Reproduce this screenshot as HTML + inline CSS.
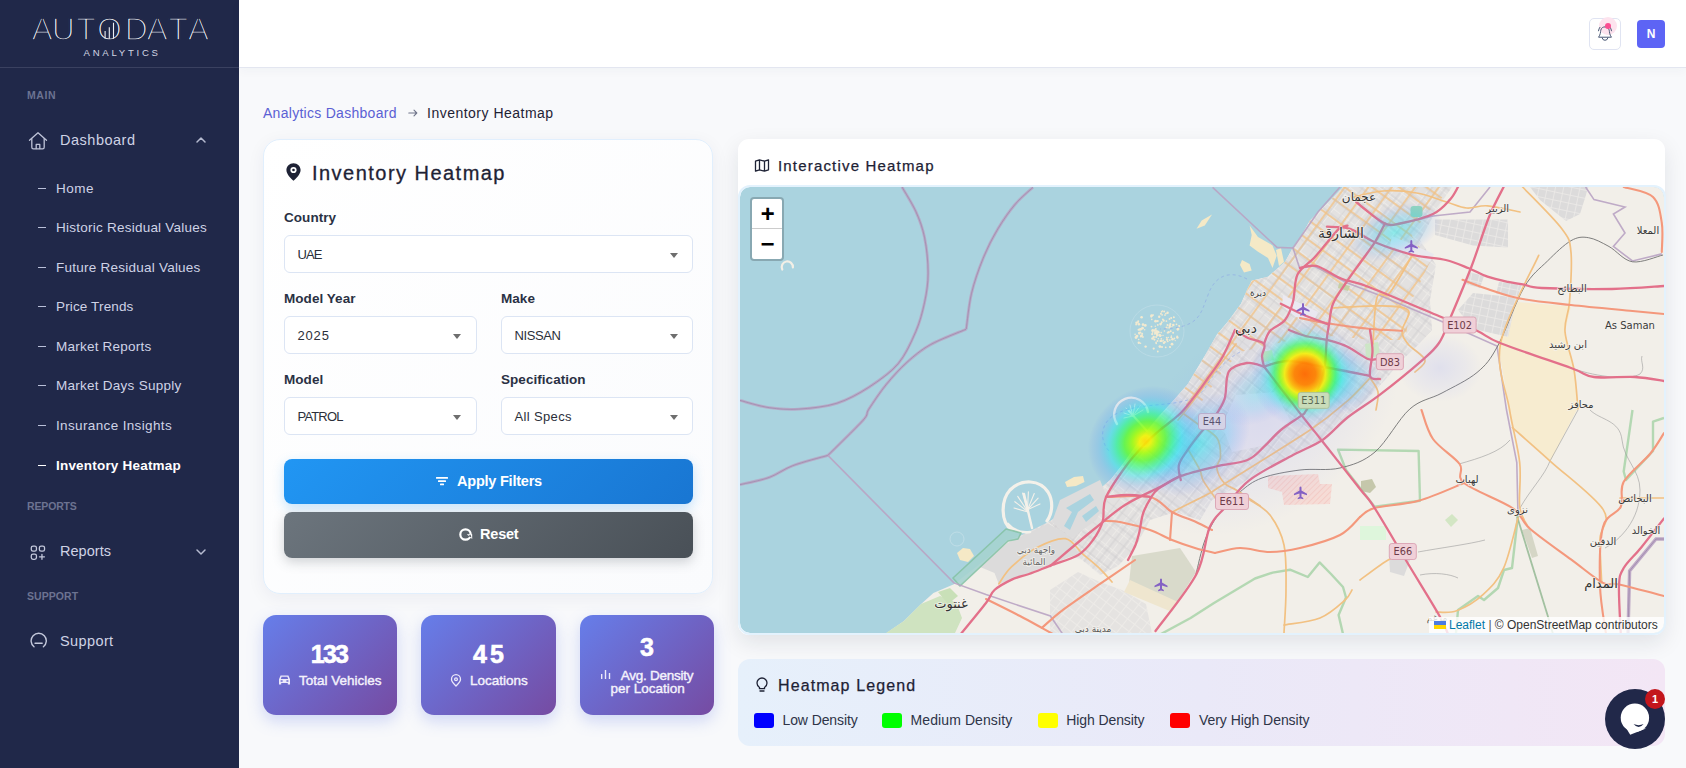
<!DOCTYPE html>
<html lang="en">
<head>
<meta charset="utf-8">
<title>Inventory Heatmap - Autodata Analytics</title>
<style>
*{box-sizing:border-box;margin:0;padding:0}
html,body{width:1686px;height:768px;overflow:hidden}
body{position:relative;background:#f8f9fb;font-family:"Liberation Sans","DejaVu Sans",sans-serif;color:#1e2235;-webkit-font-smoothing:antialiased}
.abs{position:absolute}
.t{position:absolute;white-space:nowrap;line-height:1}
/* sidebar */
#sidebar{position:absolute;left:0;top:0;width:239px;height:768px;background:#202849}
#sidebar .logo-line{position:absolute;left:0;top:67px;width:239px;height:1px;background:#3a4160}
.sec{color:#6c7391;font-size:10.5px;font-weight:700}
.nav{color:#cfd3e5;font-size:14.5px}
.sub{color:#cfd3e6;font-size:13.5px;letter-spacing:.1px}
.dash{position:absolute;left:38px;width:8px;height:1.4px;background:#b9bfd8}
/* header */
#header{position:absolute;left:239px;top:0;width:1447px;height:68px;background:#fff;border-bottom:1px solid #e3e6f0;box-shadow:0 3px 10px rgba(40,50,90,.035)}
/* cards */
.card{position:absolute;background:#fff}
.lbl{font-size:13.5px;font-weight:700;color:#2a3144;letter-spacing:.05px}
.sel{position:absolute;height:38px;border:1px solid #dce5f4;border-radius:6px;background:#fff}
.sel span{position:absolute;left:12.500px;top:11.500px;font-size:13px;line-height:14px;color:#2b2f3a}
.sel i{position:absolute;right:14.500px;top:17px;width:0;height:0;border-left:4px solid transparent;border-right:4px solid transparent;border-top:5px solid #6e6e6e}
.btn{position:absolute;left:284px;width:409px;border-radius:8px;color:#fff;font-weight:700;font-size:14.5px}
.stat{position:absolute;top:615px;height:100px;border-radius:13px;background:linear-gradient(135deg,#667eea 0%,#764ba2 100%);box-shadow:0 6px 16px rgba(102,126,234,.28);color:#fff}
.stat b{position:absolute;left:0;right:0;text-align:center;font-size:25px;line-height:1;font-weight:700;-webkit-text-stroke:.6px #fff}
.stat .s{position:absolute;white-space:nowrap;font-size:13.5px;font-weight:400;line-height:1;color:#f4f2fc;-webkit-text-stroke:.4px #f4f2fc}
.lg{position:absolute;top:713px;width:20px;height:15px;border-radius:3px}
.lgt{top:713px;font-size:14px;color:#2e3447;line-height:14px}
</style>
</head>
<body>

<!-- ================= SIDEBAR ================= -->
<div id="sidebar">
  <svg class="abs" style="left:0;top:0" width="239" height="67" viewBox="0 0 239 67">
    <text x="31.55 51.8 76.35 96.9 124.7 146.45 168.4 187.8" y="40" font-family="Liberation Sans, sans-serif" font-size="32" fill="#f4f5f9" stroke="#202849" stroke-width="1.7" paint-order="fill stroke">AUTODATA</text>
    <g stroke="#eef0f6" stroke-width="1.1" fill="none">
      <path d="M105.1 38.8V31 M109.3 38.8V27.3 M113.5 38.8V22.8"/>
    </g>
    <text x="83.5" y="56.2" font-family="Liberation Sans, sans-serif" font-size="9.6" fill="#d3d6e4" textLength="74.5" lengthAdjust="spacing">ANALYTICS</text>
  </svg>
  <div class="logo-line"></div>

  <div class="t sec" style="left:27px;top:90px;letter-spacing:.62px">MAIN</div>

  <!-- dashboard -->
  <svg class="abs" style="left:28px;top:131px" width="20" height="20" viewBox="0 0 20 20" fill="none" stroke="#bfc4d8" stroke-width="1.3" stroke-linejoin="round" stroke-linecap="round">
    <path d="M1.5 9.2 L10 1.8 L18.5 9.2"/><path d="M3.8 7.6V16.2a1.6 1.6 0 0 0 1.6 1.6h9.2a1.6 1.6 0 0 0 1.6-1.6V7.6"/><path d="M8.2 17.6v-4.2h3.6v4.2"/>
  </svg>
  <div class="t nav" style="left:60px;top:133px;letter-spacing:.51px">Dashboard</div>
  <svg class="abs" style="left:195px;top:136px" width="12" height="8" viewBox="0 0 12 8" fill="none" stroke="#b6bbd0" stroke-width="1.5" stroke-linecap="round" stroke-linejoin="round"><path d="M2 6 L6 2 L10 6"/></svg>

  <div class="dash" style="top:188px"></div><div class="t sub" style="left:56px;top:182px;letter-spacing:0.5px">Home</div>
  <div class="dash" style="top:227px"></div><div class="t sub" style="left:56px;top:221px;letter-spacing:0.24px">Historic Residual Values</div>
  <div class="dash" style="top:267px"></div><div class="t sub" style="left:56px;top:261px;letter-spacing:0.24px">Future Residual Values</div>
  <div class="dash" style="top:306px"></div><div class="t sub" style="left:56px;top:300px;letter-spacing:0.14px">Price Trends</div>
  <div class="dash" style="top:346px"></div><div class="t sub" style="left:56px;top:340px;letter-spacing:0.23px">Market Reports</div>
  <div class="dash" style="top:385px"></div><div class="t sub" style="left:56px;top:379px;letter-spacing:0.26px">Market Days Supply</div>
  <div class="dash" style="top:425px"></div><div class="t sub" style="left:56px;top:419px;letter-spacing:0.36px">Insurance Insights</div>
  <div class="dash" style="top:465px;background:#fff"></div><div class="t sub" style="left:56px;top:459px;color:#fff;font-weight:700;letter-spacing:.2px">Inventory Heatmap</div>

  <div class="t sec" style="left:27px;top:501px;letter-spacing:-.15px">REPORTS</div>
  <svg class="abs" style="left:30px;top:544.500px" width="16" height="15.500" viewBox="0 0 18 18" fill="none" stroke="#c3c8db" stroke-width="1.500" stroke-linecap="round"><rect x="1.200" y="1.200" width="6" height="6" rx="2"/><rect x="10.600" y="1.200" width="6" height="6" rx="2"/><rect x="1.200" y="10.600" width="6" height="6" rx="2"/><path d="M13.600 10.800v5.800M10.700 13.700h5.800"/></svg>
  <div class="t nav" style="left:60px;top:544px;letter-spacing:.03px">Reports</div>
  <svg class="abs" style="left:195px;top:548px" width="12" height="8" viewBox="0 0 12 8" fill="none" stroke="#b6bbd0" stroke-width="1.5" stroke-linecap="round" stroke-linejoin="round"><path d="M2 2 L6 6 L10 2"/></svg>

  <div class="t sec" style="left:27px;top:591px;letter-spacing:.07px">SUPPORT</div>
  <svg class="abs" style="left:30px;top:632px" width="17" height="17" viewBox="0 0 17 17" fill="none" stroke="#c3c8db" stroke-width="1.400" stroke-linecap="round"><path d="M4 14.800a7.600 7.600 0 1 1 9.400 0"/><path d="M5 11.300h7.200"/></svg>
  <div class="t nav" style="left:60px;top:634px;letter-spacing:.39px">Support</div>
</div>

<!-- ================= HEADER ================= -->
<div id="header"></div>
<div class="abs" style="left:1589px;top:18px;width:32px;height:32px;border:1px solid #e0e4f2;border-radius:5px;background:#fff"></div>
<div class="abs" style="left:1598.800px;top:16.900px;width:18px;height:18px;border-radius:50%;background:#fde3ee"></div>
<svg class="abs" style="left:1595px;top:22px" width="20" height="22" viewBox="0 0 20 22" fill="none" stroke="#4b5976" stroke-width="1" stroke-linecap="round" stroke-linejoin="round"><path d="M3.800 14.900C5.600 12.500 5.400 10 5.800 8.200 6.300 5.800 8 4.900 10 4.900s3.700.900 4.200 3.300c.4 1.800.2 4.300 2 6.700z"/><path d="M7.100 15.900a2.950 2.950 0 0 0 5.800 0"/><path d="M3.500 8.800c.2-1.400.7-2.500 1.400-3.500M16.500 8.800c-.2-1.400-.7-2.500-1.400-3.500"/></svg>
<div class="abs" style="left:1604.900px;top:22.900px;width:6px;height:6px;border-radius:50%;background:#fb4e92"></div>
<div class="abs" style="left:1637px;top:20px;width:28px;height:28px;border-radius:4px;background:#5d64f5"></div>
<div class="t" style="left:1637px;top:28px;width:28px;text-align:center;color:#fff;font-size:12px;font-weight:700">N</div>

<!-- ================= BREADCRUMB ================= -->
<div class="t" style="left:263px;top:106px;font-size:14px;color:#5b60d4;letter-spacing:.28px">Analytics Dashboard</div>
<svg class="abs" style="left:408px;top:108px" width="10" height="10" viewBox="0 0 10 10" fill="none" stroke="#6f748a" stroke-width="1.100" stroke-linecap="round" stroke-linejoin="round"><path d="M.8 5h8M6 2.200 8.800 5 6 7.800"/></svg>
<div class="t" style="left:427px;top:106px;font-size:14px;color:#1e2235;letter-spacing:.49px">Inventory Heatmap</div>

<!-- ================= FILTER CARD ================= -->
<div class="card" style="left:263px;top:139px;width:450px;height:455px;border-radius:17px;border:1px solid #e1effd;background:linear-gradient(135deg,#fff 0%,#fafbfd 100%);box-shadow:0 4px 18px rgba(30,40,90,.06)"></div>
<svg class="abs" style="left:285px;top:162px" width="17" height="20" viewBox="0 0 17 20"><path d="M8.500 1.200C4.500 1.200 1.400 4.200 1.400 8c0 4.600 5.200 9 7.100 10.800C10.400 17 15.600 12.600 15.600 8c0-3.800-3.100-6.800-7.100-6.800z" fill="#1e2235"/><circle cx="8.500" cy="8" r="3.100" fill="#fff"/><circle cx="8.500" cy="8" r="1.300" fill="#1e2235"/></svg>
<div class="t" style="left:312px;top:163px;font-size:20px;color:#1e2235;letter-spacing:1.47px;-webkit-text-stroke:.3px #1e2235">Inventory Heatmap</div>

<div class="t lbl" style="left:284px;top:210.7px">Country</div>
<div class="sel" style="left:284px;top:235px;width:409px"><span style="letter-spacing:-0.85px">UAE</span><i></i></div>
<div class="t lbl" style="left:284px;top:291.7px">Model Year</div>
<div class="t lbl" style="left:501px;top:291.7px">Make</div>
<div class="sel" style="left:284px;top:316px;width:192.500px"><span style="letter-spacing:0.83px">2025</span><i></i></div>
<div class="sel" style="left:501px;top:316px;width:192px"><span style="letter-spacing:-0.42px">NISSAN</span><i></i></div>
<div class="t lbl" style="left:284px;top:372.7px">Model</div>
<div class="t lbl" style="left:501px;top:372.7px">Specification</div>
<div class="sel" style="left:284px;top:397px;width:192.500px"><span style="letter-spacing:-0.83px">PATROL</span><i></i></div>
<div class="sel" style="left:501px;top:397px;width:192px"><span style="letter-spacing:0.36px">All Specs</span><i></i></div>

<div class="btn" style="top:459px;height:45px;background:linear-gradient(135deg,#2196f3,#1976d2);box-shadow:0 4px 12px rgba(33,150,243,.25)"></div>
<svg class="abs" style="left:435px;top:476px" width="14" height="10" viewBox="0 0 14 10" fill="#fff"><rect x="1" y="1" width="12" height="1.800" rx=".5"/><rect x="3" y="4.200" width="8" height="1.800" rx=".5"/><rect x="5" y="7.400" width="4" height="1.800" rx=".5"/></svg>
<div class="t" style="left:457px;top:474px;font-size:14.5px;font-weight:700;color:#fff;letter-spacing:-.22px">Apply Filters</div>

<div class="btn" style="top:512px;height:46px;background:linear-gradient(135deg,#6c757d,#495057);box-shadow:0 4px 12px rgba(73,80,87,.25)"></div>
<svg class="abs" style="left:458px;top:527px" width="15" height="15" viewBox="0 0 15 15" fill="none"><circle cx="7.500" cy="7.500" r="5.200" stroke="#fff" stroke-width="2.200"/><path d="M8.800 7.300h5.400v4.600z" fill="#fff"/><path d="M10.400 9.200 l2 -1.600 l1.200 3z" fill="#5a6168"/></svg>
<div class="t" style="left:480px;top:527px;font-size:14.5px;font-weight:700;color:#fff;letter-spacing:-.2px">Reset</div>

<!-- ================= STATS ================= -->
<div class="stat" style="left:263px;width:134px"><b style="top:27px;left:-2px;letter-spacing:-1.75px">133</b><span class="s" style="left:36px;top:59px">Total Vehicles</span></div>
<div class="stat" style="left:421px;width:135px"><b style="top:27px;letter-spacing:3px;padding-left:3px">45</b><span class="s" style="left:49px;top:59px">Locations</span></div>
<div class="stat" style="left:580px;width:134px"><b style="top:20px">3</b><span class="s" style="left:40.800px;top:54px;letter-spacing:-.25px">Avg. Density</span><span class="s" style="left:30.500px;top:67px">per Location</span></div>
<svg class="abs" style="left:278px;top:674px" width="13" height="12" viewBox="0 0 13 12" fill="#ece9fa"><path d="M2.600 1.500h7.800l1.600 3.800v5.200h-2.200v-1.500H3.200v1.500H1V5.300z M3.600 2.800 2.800 5h7.400l-.8-2.200z M2.600 6.200v1.500h2V6.200z M8.400 6.200v1.500h2V6.200z" fill-rule="evenodd"/></svg>
<svg class="abs" style="left:450px;top:674px" width="12" height="13" viewBox="0 0 12 13" fill="none" stroke="#ece9fa" stroke-width="1.300"><path d="M6 12C4.200 10.200 1.500 7.800 1.500 5.200a4.500 4.500 0 0 1 9 0C10.500 7.800 7.800 10.200 6 12z"/><circle cx="6" cy="5.200" r="1.400"/></svg>
<svg class="abs" style="left:600px;top:669px" width="12" height="11" viewBox="0 0 12 11" fill="#ece9fa"><rect x="1" y="5" width="1.400" height="5"/><rect x="4.800" y="1" width="1.400" height="9"/><rect x="8.800" y="4" width="1.400" height="6"/></svg>

<!-- ================= MAP CARD ================= -->
<div class="card" style="left:738px;top:139px;width:927px;height:496px;border-radius:11px;box-shadow:0 8px 22px rgba(20,25,50,.10)"></div>
<svg class="abs" style="left:754px;top:158px" width="16" height="15" viewBox="0 0 16 15" fill="none" stroke="#1e2235" stroke-width="1.300" stroke-linejoin="round"><path d="M1.500 3.200 5.500 1.800 10.500 3.200 14.500 1.800V11.800L10.500 13.200 5.500 11.800 1.500 13.200z M5.500 1.800v10 M10.500 3.200v10"/></svg>
<div class="t" style="left:778px;top:158px;font-size:15px;color:#1e2235;letter-spacing:1.18px;-webkit-text-stroke:.25px #1e2235">Interactive Heatmap</div>

<svg class="abs" style="left:740px;top:187px" width="924" height="446" viewBox="740 187 924 446">
<defs>
<clipPath id="mclip"><rect x="740" y="187" width="924" height="446" rx="10"/></clipPath>
<pattern id="grid" width="9" height="9" patternUnits="userSpaceOnUse" patternTransform="rotate(38)"><rect width="9" height="9" fill="#e3e1e0"/><path d="M0 .5H9M.5 0V9" stroke="#eceae7" stroke-width="1"/></pattern>
<pattern id="grid2" width="19" height="16" patternUnits="userSpaceOnUse" patternTransform="rotate(36)"><path d="M0 1H19M1 0V16" stroke="#f2c182" stroke-width="1.5" fill="none"/></pattern>
<pattern id="grid3" width="13" height="11" patternUnits="userSpaceOnUse" patternTransform="rotate(-52)"><path d="M0 1H13M1 0V11" stroke="#c4c3c6" stroke-width=".7" fill="none"/></pattern>
<pattern id="igrid" width="8" height="8" patternUnits="userSpaceOnUse" patternTransform="rotate(12)"><rect width="8" height="8" fill="#dcdbdb"/><path d="M0 .5H8M.5 0V8" stroke="#ebe9e6" stroke-width=".9"/></pattern>
<pattern id="hatch" width="4" height="4" patternUnits="userSpaceOnUse" patternTransform="rotate(45)"><rect width="4" height="4" fill="#f6dcd6"/><path d="M0 0V4" stroke="#f0b4ae" stroke-width=".8"/></pattern>
<radialGradient id="h1"><stop offset="0" stop-color="#ff6a00" stop-opacity=".96"/><stop offset=".2" stop-color="#ff8200" stop-opacity=".95"/><stop offset=".3" stop-color="#ffb400" stop-opacity=".92"/><stop offset=".38" stop-color="#f6f000" stop-opacity=".88"/><stop offset=".47" stop-color="#90ff00" stop-opacity=".78"/><stop offset=".57" stop-color="#20ff50" stop-opacity=".6"/><stop offset=".7" stop-color="#00f0e0" stop-opacity=".3"/><stop offset=".85" stop-color="#40b0ff" stop-opacity=".12"/><stop offset="1" stop-color="#4060ff" stop-opacity="0"/></radialGradient>
<radialGradient id="h2"><stop offset="0" stop-color="#ffdc00" stop-opacity=".92"/><stop offset=".1" stop-color="#f0f400" stop-opacity=".9"/><stop offset=".22" stop-color="#a0ff00" stop-opacity=".84"/><stop offset=".36" stop-color="#50ff20" stop-opacity=".74"/><stop offset=".5" stop-color="#10ff80" stop-opacity=".56"/><stop offset=".64" stop-color="#00eaf0" stop-opacity=".38"/><stop offset=".82" stop-color="#3098ff" stop-opacity=".17"/><stop offset="1" stop-color="#4060ff" stop-opacity="0"/></radialGradient>
<radialGradient id="h3"><stop offset="0" stop-color="#00f0f0" stop-opacity=".5"/><stop offset=".55" stop-color="#20c0ff" stop-opacity=".28"/><stop offset="1" stop-color="#5070ff" stop-opacity="0"/></radialGradient>
<radialGradient id="h4"><stop offset="0" stop-color="#8090ff" stop-opacity=".16"/><stop offset=".6" stop-color="#8c9aff" stop-opacity=".08"/><stop offset="1" stop-color="#8090ff" stop-opacity="0"/></radialGradient>
</defs>
<g clip-path="url(#mclip)">
<rect x="740" y="187" width="924" height="446" fill="#aad3df"/>
<path d="M1343 187 L1333 197.5 L1322.5 208 L1310 220.4 L1301.7 235 L1293 247.5 L1285 262 L1268 276.7 L1251.7 280.8 L1247.5 289 L1241 303.8 L1228.8 320.4 L1217 334.4 L1205.3 355 L1187.7 384.2 L1173 401 L1158.2 417 L1141.2 437.8 L1124.2 462.3 L1111 479.3 L1097.8 490.7 L1088 496 L1067.6 509.6 L1050 521.3 L1036 530 L1020 536 L1006.6 540.4 L989 556.5 L974.4 568.2 L953.9 584.3 L933.4 593 L921.7 603.4 L904 621 L886.5 633 L1664 633 L1664 187Z" fill="#f2efe9"/>
<path d="M1518 302 L1571 306.6 L1565 331.5 L1574 369.6 L1578 409 L1576.8 410 L1550.4 461.3 L1512.4 427.6 L1509.4 409 L1497.7 343Z" fill="#f7ecd0"/>
<path d="M1343 187 L1333 197.5 L1322.5 208 L1310 220.4 L1301.7 235 L1293 247.5 L1285 262 L1268 276.7 L1251.7 280.8 L1247.5 289 L1241 303.8 L1228.8 320.4 L1217 334.4 L1205.3 355 L1187.7 384.2 L1173 401 L1158.2 417 L1141.2 437.8 L1124.2 462.3 L1111 479.3 L1097.8 490.7 L1088 496 L1067.6 509.6 L1050 521.3 L1020 536 L1000 548 L1010 556 L1040 548 L1062 552 L1082 560 L1100 575 L1118 566 L1135 548 L1150 520 L1175 512 L1200 520 L1212 500 L1235 488 L1262 470 L1290 455 L1320 440 L1345 418 L1368 398 L1385 380 L1400 362 L1418 345 L1432 330 L1430 300 L1436 265 L1420 240 L1430 222 L1440 205 L1452 187Z" fill="url(#grid)"/>
<path d="M1343 187 L1333 197.5 L1322.5 208 L1310 220.4 L1301.7 235 L1293 247.5 L1285 262 L1268 276.7 L1251.7 280.8 L1247.5 289 L1241 303.8 L1228.8 320.4 L1217 334.4 L1205.3 355 L1187.7 384.2 L1176 400 L1196 410 L1222 372 L1240 352 L1270 345 L1300 338 L1335 336 L1372 340 L1405 340 L1412 300 L1430 262 L1412 236 L1425 215 L1440 200 L1452 187Z" fill="url(#grid2)" opacity=".95"/>
<path d="M1343 187 L1333 197.5 L1322.5 208 L1310 220.4 L1301.7 235 L1293 247.5 L1285 262 L1268 276.7 L1251.7 280.8 L1247.5 289 L1241 303.8 L1228.8 320.4 L1217 334.4 L1205.3 355 L1187.7 384.2 L1173 401 L1158.2 417 L1141.2 437.8 L1124.2 462.3 L1111 479.3 L1097.8 490.7 L1088 496 L1067.6 509.6 L1050 521.3 L1020 536 L1000 548 L1010 556 L1040 548 L1062 552 L1082 560 L1100 575 L1118 566 L1135 548 L1150 520 L1175 512 L1200 520 L1212 500 L1235 488 L1262 470 L1290 455 L1320 440 L1345 418 L1368 398 L1385 380 L1400 362 L1418 345 L1432 330 L1430 300 L1436 265 L1420 240 L1430 222 L1440 205 L1452 187Z" fill="url(#grid3)" opacity=".8"/>
<path d="M1283 295 L1318 312 L1314 321 L1296 317 L1282 306Z" fill="#ebe9f1"/>
<path d="M1236 395 L1275 392 L1290 420 L1262 446 L1232 452 L1222 425Z" fill="#ece9ea"/>
<path d="M1392 236 L1434 254 L1430 262 L1390 246Z" fill="#e9e8ee"/>
<path d="M1435 219.4 L1508 219.4 L1508 247.5 L1473 245.4 L1435 235Z" fill="url(#igrid)"/>
<path d="M1473 293 L1516.7 297.5 L1508 337 L1473 328.8 L1458 310Z" fill="url(#igrid)"/>
<path d="M1530 187 L1588.5 187 L1580 214 L1566 221 L1540 200Z" fill="url(#igrid)"/>
<path d="M1499 282 L1522 284 L1518 296 L1496 294Z" fill="url(#igrid)"/>
<path d="M1470 272 L1484 276 L1480 288 L1466 284Z" fill="url(#igrid)"/>
<path d="M1050 590 L1078 572 L1100 582 L1122 590 L1146 604 L1152 633 L1050 633Z" fill="url(#grid)" opacity=".85"/>
<path d="M1132 556 L1180 548 L1196 572 L1176 604 L1128 592Z" fill="#d9dacb"/>
<path d="M1130 580 L1178 602 L1172 612 L1124 592Z" fill="#efe6cf"/>
<path d="M1268 476 L1318 474 L1320 484 L1332 484 L1330 504 L1284 505 L1282 492 L1268 488Z" fill="url(#hatch)"/>
<path d="M1060 500 L1100 480 L1108 500 L1096 520 L1072 538 L1052 522Z" fill="#dddcdc"/>
<path d="M1066 508 L1090 494 L1094 500 L1078 512 L1070 530 L1064 526 L1072 512Z" fill="#aad3df"/><path d="M1082 516 L1096 506 L1099 511 L1086 522Z" fill="#aad3df"/>
<path d="M979.500 566.700 L1007.400 543 L1048.200 523.700 L1067.600 534.400 L1078.300 553.800 L1050.400 564.500 L1029 573 L1011.700 579.600 L998.800 583.900 L994.500 573Z" fill="#dcdbdb"/>
<path d="M886 633 L904 621 L921 604 L940 596 L956 602 L962 618 L955 633Z" fill="#cfe3c0"/>
<path d="M938 592 L950 588 L958 596 L948 604Z" fill="#c9e0b8"/>
<rect x="1410.500" y="206" width="12" height="11" rx="3" fill="#93d8bd"/>
<path d="M1262 352 L1272 350 L1274 360 L1264 362Z" fill="#cdebb0"/><path d="M1365 344 L1378 342 L1380 356 L1366 358Z" fill="#cfe8c4"/><path d="M1339 283 L1350 286 L1348 291 L1338 288Z" fill="#c6cfa5"/>
<path d="M1361 481 L1372 479 L1376 487 L1370 493 L1361 491Z" fill="#c5c7ab"/><path d="M1522 530 L1530 528 L1538 556 L1532 558Z" fill="#d5d6c6"/><rect x="1360" y="526" width="26" height="14" fill="#def6dc"/><path d="M1445 520 L1452 514 L1458 520 L1451 527Z" fill="#d3e6c4"/>
<path d="M1389 556 L1410 560 L1404 576 L1390 572Z" fill="#dcdbdb"/>
<g fill="#f5e9c6">
<path d="M1249.6 225.6 L1258 237 L1272.5 245.4 L1276.7 255.8 L1272.5 268 L1268 258 L1258 251.7 L1249.6 245.4 L1251.7 235Z"/>
<path d="M1242 260 L1249.6 264 L1251.7 270.4 L1244 272.5 L1240 265Z"/>
<path d="M1196.5 228.8 L1201.7 220.4 L1212 214.6 L1204.8 225.6Z"/>
<path d="M1276 250 L1281 248 L1284 262 L1279 266Z"/>
<path d="M1065 482 L1074 477 L1083 476 L1084.500 482 L1076 486 L1067 487Z"/>
<path d="M957 553 L963 548 L970 549 L974 556 L968 562 L960 560Z"/>
</g>
<circle cx="957" cy="539" r="7" fill="none" stroke="#c4dfe8" stroke-width=".8"/>
<g fill="#f3ead0"><circle cx="1153.7" cy="337.0" r="1.2"/><circle cx="1171.3" cy="337.3" r="1.0"/><circle cx="1171.4" cy="336.0" r="0.7"/><circle cx="1152.7" cy="332.7" r="0.8"/><circle cx="1138.7" cy="339.5" r="0.8"/><circle cx="1159.9" cy="346.6" r="1.4"/><circle cx="1145.3" cy="325.4" r="1.4"/><circle cx="1177.2" cy="336.5" r="0.9"/><circle cx="1160.9" cy="335.6" r="0.9"/><circle cx="1160.3" cy="324.1" r="1.1"/><circle cx="1152.8" cy="329.8" r="0.7"/><circle cx="1162.0" cy="347.0" r="1.0"/><circle cx="1162.1" cy="314.8" r="0.9"/><circle cx="1143.0" cy="324.6" r="1.3"/><circle cx="1155.6" cy="321.2" r="1.4"/><circle cx="1167.1" cy="339.4" r="1.2"/><circle cx="1165.7" cy="342.1" r="0.7"/><circle cx="1137.9" cy="322.5" r="0.9"/><circle cx="1151.3" cy="316.6" r="1.1"/><circle cx="1137.0" cy="336.1" r="1.4"/><circle cx="1139.2" cy="333.7" r="0.7"/><circle cx="1151.7" cy="315.6" r="1.4"/><circle cx="1161.7" cy="322.2" r="1.0"/><circle cx="1155.8" cy="329.1" r="1.0"/><circle cx="1160.1" cy="336.0" r="0.7"/><circle cx="1157.8" cy="324.9" r="0.9"/><circle cx="1140.5" cy="343.2" r="0.8"/><circle cx="1141.7" cy="335.6" r="1.3"/><circle cx="1165.9" cy="313.6" r="0.9"/><circle cx="1173.8" cy="317.5" r="0.8"/><circle cx="1161.3" cy="338.8" r="0.9"/><circle cx="1140.3" cy="332.4" r="0.9"/><circle cx="1170.7" cy="331.3" r="1.0"/><circle cx="1136.5" cy="322.8" r="1.2"/><circle cx="1139.8" cy="329.5" r="1.2"/><circle cx="1177.4" cy="337.5" r="1.2"/><circle cx="1171.2" cy="318.1" r="1.0"/><circle cx="1152.2" cy="334.2" r="1.1"/><circle cx="1161.2" cy="332.6" r="0.8"/><circle cx="1163.3" cy="340.3" r="0.7"/><circle cx="1164.4" cy="331.0" r="0.8"/><circle cx="1155.3" cy="332.7" r="1.3"/><circle cx="1151.5" cy="326.6" r="0.9"/><circle cx="1172.0" cy="344.2" r="1.4"/><circle cx="1142.4" cy="333.9" r="0.8"/><circle cx="1166.7" cy="337.6" r="0.9"/><circle cx="1160.7" cy="324.8" r="0.7"/><circle cx="1172.0" cy="326.7" r="0.8"/><circle cx="1154.4" cy="330.4" r="1.1"/><circle cx="1178.0" cy="328.4" r="1.2"/><circle cx="1156.1" cy="342.4" r="0.8"/><circle cx="1159.2" cy="316.8" r="1.2"/><circle cx="1152.5" cy="338.5" r="1.3"/><circle cx="1177.9" cy="329.2" r="1.3"/><circle cx="1165.0" cy="315.1" r="0.9"/><circle cx="1144.7" cy="329.8" r="0.7"/><circle cx="1167.6" cy="332.7" r="0.9"/><circle cx="1136.0" cy="337.5" r="1.4"/><circle cx="1169.1" cy="327.8" r="0.9"/><circle cx="1158.3" cy="338.8" r="0.8"/><circle cx="1141.6" cy="317.2" r="1.3"/><circle cx="1139.3" cy="333.1" r="1.3"/><circle cx="1172.5" cy="339.3" r="1.3"/><circle cx="1160.9" cy="313.8" r="1.0"/><circle cx="1165.7" cy="347.3" r="0.9"/><circle cx="1164.1" cy="311.5" r="1.0"/><circle cx="1138.8" cy="342.7" r="1.2"/><circle cx="1160.2" cy="336.3" r="0.8"/><circle cx="1173.8" cy="320.7" r="0.8"/><circle cx="1167.6" cy="312.7" r="1.2"/><circle cx="1158.2" cy="332.2" r="1.4"/><circle cx="1169.8" cy="325.9" r="1.3"/><circle cx="1161.2" cy="323.7" r="0.9"/><circle cx="1154.4" cy="339.6" r="1.1"/><circle cx="1156.2" cy="343.4" r="0.8"/><circle cx="1167.5" cy="325.0" r="1.0"/><circle cx="1138.2" cy="321.2" r="1.0"/><circle cx="1170.3" cy="324.2" r="1.1"/><circle cx="1154.9" cy="330.7" r="1.0"/><circle cx="1157.3" cy="331.7" r="1.3"/><circle cx="1163.9" cy="342.8" r="1.2"/><circle cx="1140.9" cy="329.3" r="1.2"/><circle cx="1169.8" cy="340.1" r="0.9"/><circle cx="1153.7" cy="348.6" r="1.1"/><circle cx="1138.9" cy="324.3" r="1.3"/><circle cx="1140.9" cy="336.4" r="1.1"/><circle cx="1138.5" cy="329.7" r="1.0"/><circle cx="1142.5" cy="328.2" r="1.4"/><circle cx="1166.6" cy="327.7" r="1.1"/><circle cx="1176.5" cy="324.4" r="0.8"/><circle cx="1167.2" cy="339.9" r="0.8"/><circle cx="1157.3" cy="335.3" r="1.2"/><circle cx="1161.6" cy="311.9" r="0.8"/><circle cx="1153.2" cy="315.1" r="0.8"/><circle cx="1173.8" cy="317.2" r="0.9"/><circle cx="1169.7" cy="327.5" r="1.0"/><circle cx="1177.7" cy="329.8" r="0.8"/><circle cx="1142.9" cy="336.9" r="0.9"/><circle cx="1160.9" cy="340.9" r="1.2"/><circle cx="1173.1" cy="332.8" r="1.0"/><circle cx="1168.8" cy="332.2" r="1.1"/><circle cx="1152.6" cy="330.7" r="1.4"/><circle cx="1162.4" cy="311.1" r="0.8"/><circle cx="1156.7" cy="334.0" r="1.2"/><circle cx="1156.1" cy="337.1" r="1.0"/><circle cx="1174.4" cy="321.2" r="0.9"/><circle cx="1170.0" cy="347.0" r="1.1"/><circle cx="1155.3" cy="326.3" r="0.7"/><circle cx="1151.8" cy="319.4" r="0.8"/><circle cx="1173.3" cy="325.0" r="1.3"/><circle cx="1175.2" cy="340.6" r="0.7"/><circle cx="1166.4" cy="321.1" r="0.9"/><circle cx="1136.1" cy="324.5" r="0.9"/><circle cx="1167.8" cy="341.3" r="0.9"/><circle cx="1163.0" cy="335.4" r="0.7"/><circle cx="1160.4" cy="340.9" r="0.9"/><circle cx="1157.7" cy="321.1" r="1.1"/><circle cx="1162.4" cy="341.0" r="0.7"/><circle cx="1157.0" cy="332.7" r="1.2"/><circle cx="1135.1" cy="334.2" r="0.8"/><circle cx="1162.9" cy="319.5" r="1.0"/><circle cx="1163.7" cy="320.7" r="1.1"/><circle cx="1145.6" cy="346.6" r="1.2"/><circle cx="1154.7" cy="334.0" r="0.8"/><circle cx="1174.4" cy="338.5" r="0.9"/><circle cx="1159.7" cy="335.1" r="1.3"/><circle cx="1169.5" cy="319.0" r="0.9"/><circle cx="1157.5" cy="341.0" r="1.0"/><circle cx="1164.8" cy="341.8" r="0.9"/><circle cx="1179.1" cy="326.1" r="1.1"/><circle cx="1157.8" cy="351.5" r="0.9"/><circle cx="1156.8" cy="331.3" r="1.0"/><circle cx="1141.9" cy="333.2" r="0.8"/><circle cx="1156.0" cy="331.0" r="0.9"/><circle cx="1168.3" cy="337.4" r="0.7"/><circle cx="1168.2" cy="332.4" r="0.9"/></g>
<ellipse cx="1157" cy="331" rx="27" ry="26" fill="none" stroke="#bcdce6" stroke-width=".8"/>
<g fill="none" stroke="#f4f1ea" stroke-linecap="round"><path d="M1012 530 C1000 522 1001 500 1010 490 C1022 478 1040 480 1048 492 C1054 502 1052 514 1047 521" stroke-width="3.200"/><path d="M1008 524 C1014 531 1022 533 1030 532" stroke-width="2.600"/>
<path d="M1032 528 L1024 494" stroke-width="2.4"/>
<path d="M1028 512 l-14 -4" stroke-width="1.1"/>
<path d="M1027.85 511.7 l-13 -10" stroke-width="1.1"/>
<path d="M1027.7 511.4 l-10 -15" stroke-width="1.1"/>
<path d="M1027.55 511.1 l-5 -18" stroke-width="1.1"/>
<path d="M1027.4 510.8 l1 -19" stroke-width="1.1"/>
<path d="M1027.25 510.5 l7 -17" stroke-width="1.1"/>
<path d="M1027.1 510.2 l11 -12" stroke-width="1.1"/>
<path d="M1026.95 509.9 l13 -6" stroke-width="1.1"/>
</g>
<g fill="none" stroke="#f4f1ea" stroke-linecap="round"><path d="M1117 424a17 17 0 1 1 31 -12" stroke-width="2.400"/><path d="M1147 431 L1129 411" stroke-width="2"/>
<path d="M1133 416 l-9 2" stroke-width=".9"/>
<path d="M1133 416 l-9 -3" stroke-width=".9"/>
<path d="M1133 416 l-7 -8" stroke-width=".9"/>
<path d="M1133 416 l-3 -11" stroke-width=".9"/>
<path d="M1133 416 l2 -12" stroke-width=".9"/>
<path d="M1133 416 l7 -10" stroke-width=".9"/>
<path d="M1133 416 l10 -6" stroke-width=".9"/>
</g>
<path d="M782.300 269.500a5.600 5.600 0 1 1 10.600 -2" fill="none" stroke="#f3efe6" stroke-width="2.200" stroke-linecap="round"/>
<path d="M953 578 L1006 529 L1021 533 L1018 539 L1008 541 L960 586Z" fill="#a6d3d0" stroke="#86c3a6" stroke-width="1.6" stroke-linejoin="round" opacity=".9"/>
<g fill="none" stroke="#8fa9e6" stroke-width=".8" stroke-dasharray="3 3" opacity=".8">
<path d="M1247 279 C1230 270 1215 275 1208 295 C1200 315 1200 328 1160 329"/><path d="M1240 352 C1225 360 1215 372 1205 388 C1190 410 1150 400 1120 412 C1100 420 1098 440 1110 452"/>
</g>
<path d="M902 187 C904.3 191.1 912.0 203.0 915.8 211.4 C919.6 219.8 922.5 227.4 924.6 237.7 C926.7 247.9 928.1 262.1 928.1 272.9 C928.1 283.6 926.7 292.4 924.6 302.2 C922.5 312.0 920.2 321.2 915.8 331.5 C911.4 341.8 906.0 354.4 898.2 363.7 C890.4 373.0 879.1 380.6 868.9 387.2 C858.6 393.8 848.4 399.6 836.7 403.3 C825.0 407.0 809.8 408.4 798.6 409.1 C787.4 409.8 779.1 409.1 769.3 407.7 C759.5 406.2 744.9 401.6 740 400.4" fill="none" stroke="#b9a3c3" stroke-width="2.8" opacity=".85"/><path d="M902 187 C904.3 191.1 912.0 203.0 915.8 211.4 C919.6 219.8 922.5 227.4 924.6 237.7 C926.7 247.9 928.1 262.1 928.1 272.9 C928.1 283.6 926.7 292.4 924.6 302.2 C922.5 312.0 920.2 321.2 915.8 331.5 C911.4 341.8 906.0 354.4 898.2 363.7 C890.4 373.0 879.1 380.6 868.9 387.2 C858.6 393.8 848.4 399.6 836.7 403.3 C825.0 407.0 809.8 408.4 798.6 409.1 C787.4 409.8 779.1 409.1 769.3 407.7 C759.5 406.2 744.9 401.6 740 400.4" fill="none" stroke="#9d86aa" stroke-width=".7"/>
<path d="M1033 187.3 C1030.1 190.1 1021.3 197.1 1015.4 204 C1009.5 210.9 1003.2 220.0 997.8 229 C992.4 238.0 987.6 247.5 983.2 258.2 C978.8 268.9 974.3 281.6 971.5 293.4 C968.7 305.2 967.1 323.2 966.2 329.2" fill="none" stroke="#b9a3c3" stroke-width="2.8" opacity=".85"/><path d="M1033 187.3 C1030.1 190.1 1021.3 197.1 1015.4 204 C1009.5 210.9 1003.2 220.0 997.8 229 C992.4 238.0 987.6 247.5 983.2 258.2 C978.8 268.9 974.3 281.6 971.5 293.4 C968.7 305.2 967.1 323.2 966.2 329.2" fill="none" stroke="#9d86aa" stroke-width=".7"/>
<path d="M966.2 329.2 C960.2 331.8 940.3 339.2 930.4 344.7 C920.5 350.2 914.3 355.7 907 362.3 C899.7 368.9 892.9 376.4 886.5 384.2 C880.1 392.0 872.8 403.1 868.9 409.1 C865.0 415.1 869.8 412.6 863 420.3 C856.2 428.0 833.8 449.5 827.9 455.4" fill="none" stroke="#b9a3c3" stroke-width="2.8" opacity=".85"/><path d="M966.2 329.2 C960.2 331.8 940.3 339.2 930.4 344.7 C920.5 350.2 914.3 355.7 907 362.3 C899.7 368.9 892.9 376.4 886.5 384.2 C880.1 392.0 872.8 403.1 868.9 409.1 C865.0 415.1 869.8 412.6 863 420.3 C856.2 428.0 833.8 449.5 827.9 455.4" fill="none" stroke="#9d86aa" stroke-width=".7"/>
<path d="M827.9 455.4 C822.0 457.1 802.5 462.0 792.7 465.7 C782.9 469.4 778.1 474.2 769.3 477.4 C760.5 480.6 744.9 483.5 740 484.7" fill="none" stroke="#b9a3c3" stroke-width="2.8" opacity=".85"/><path d="M827.9 455.4 C822.0 457.1 802.5 462.0 792.7 465.7 C782.9 469.4 778.1 474.2 769.3 477.4 C760.5 480.6 744.9 483.5 740 484.7" fill="none" stroke="#9d86aa" stroke-width=".7"/>
<path d="M827.9 455.4 L953.9 582.9 L986 594.6 L1050.4 616 L1063.3 635" fill="none" stroke="#b9a3c3" stroke-width="1.6" opacity=".9"/>
<path d="M1212.6 187.3 L1277 247.4 L1293 248" fill="none" stroke="#b9a3c3" stroke-width="1.6" opacity=".9"/>
<path d="M1340 187 L1318 212 L1293 248 L1299.6 268 L1314 266 L1347.5 283 L1380 295.4 L1443 322 L1497 346 L1506.5 410 L1516.8 462.7 L1518 515.5" fill="none" stroke="#b9a3c3" stroke-width="1.6" opacity=".9"/>
<path d="M1356 201.7 L1385 226 L1400 224 L1433 216 L1470 212 L1490 187" fill="none" stroke="#b9a3c3" stroke-width="1.6" opacity=".9"/>
<path d="M1585.6 187 L1594 199.6 L1625 207 L1613.4 214 L1625 233 L1613.4 246.5 L1632.5 261 L1661.8 253.9" fill="none" stroke="#b9a3c3" stroke-width="1.6" opacity=".9"/>
<path d="M1664 539 L1656 539 L1629.600 571 L1628 634" fill="none" stroke="#b9a3c3" stroke-width="3.4" opacity=".9"/><path d="M1664 539 L1656 539 L1629.600 571 L1628 634" fill="none" stroke="#9d86aa" stroke-width=".8"/>
<g fill="none" stroke="#9fd0a0" stroke-width="2.4" opacity=".75" stroke-linejoin="round">
<path d="M1338 449.600 L1418.600 451 L1420 500.800 L1374.600 506.700 L1346 470Z"/>
<path d="M1632.500 410 L1623.700 471.500 L1626 480 L1653 451 L1653 421.700 L1664 418"/>
<path d="M1150 640 L1190.6 618 L1214 603 L1255 578.5 L1272.7 572.6 L1290 569.7 L1307.8 577 L1319.6 562.4 L1331 574 L1343 587 L1346 597.5 L1338.6 615 L1343 634"/>
<path d="M1518 515.500 L1512 568 L1504 570 L1498 588 L1484 600 L1478 596 L1458 610 L1456 633"/>
</g>
<path d="M1516.800 515.500 L1547.500 615 L1553 634" fill="none" stroke="#8fb58f" stroke-width="1.8" opacity=".8"/>
<path d="M1196 574 C1197.5 568.3 1201.3 549.8 1205 540 C1208.7 530.2 1212.2 523.0 1218 515 C1223.8 507.0 1232.7 498.2 1240 492 C1247.3 485.8 1252.0 481.7 1262 478 C1272.0 474.3 1287.0 471.7 1300 470 C1313.0 468.3 1327.5 471.0 1340 468 C1352.5 465.0 1363.4 461.8 1375 452 C1386.6 442.2 1398.6 418.8 1409.8 409 C1421.0 399.2 1430.8 399.1 1442 393 C1453.2 386.9 1467.7 380.3 1477 372.5 C1486.3 364.7 1489.9 360.2 1497.7 346 C1505.5 331.8 1515.7 301.7 1524 287.5 C1532.3 273.3 1539.7 268.8 1547.5 261 C1555.3 253.2 1564.2 244.6 1571 240.7 C1577.8 236.8 1582.2 236.7 1588.5 237.7 C1594.8 238.7 1601.7 242.5 1609 246.5 C1616.3 250.5 1623.5 260.4 1632.5 261.8 C1641.5 263.2 1657.9 256.1 1663 255" fill="none" stroke="#707070" stroke-width=".9"/>
<g fill="none" stroke="#9a9a9a" stroke-width=".6"><path d="M1571 368 C1600 378 1630 380 1640 374 C1646 368 1640 362 1642 356"/><path d="M1459 464 C1480 458 1500 452 1510 440"/><path d="M1578 410 L1550 461 C1545 475 1530 490 1520 508"/><path d="M1590 410 C1600 420 1620 420 1622 440 C1624 460 1640 470 1640 490 C1640 520 1620 540 1605 548"/><path d="M1418 552 C1440 548 1470 544 1485 540"/><path d="M1420 575 C1435 572 1450 574 1458 578"/></g>
<g fill="none" stroke="#f2c182" stroke-width="1.700" stroke-linecap="round" stroke-linejoin="round">
<path d="M1352 197.5 C1357.2 196.4 1372.2 191.8 1383 191 C1393.8 190.2 1406.2 191.2 1416.7 193 C1427.2 194.8 1437.5 199.2 1445.8 201.7 C1454.1 204.2 1459.8 207.3 1466.7 208 C1473.7 208.7 1478.6 205.1 1487.5 205.8 C1496.4 206.5 1514.6 211.0 1520 212"/>
<path d="M1412.5 254.8 C1408.7 261.2 1395.5 285.9 1389.6 293 C1383.7 300.1 1379.8 289.0 1377 297.5 C1374.2 306.0 1373.7 336.2 1373 344"/>
<path d="M1333 308 C1340.3 307.6 1364.5 305.5 1377 305.8 C1389.5 306.1 1403.8 305.8 1408 310 C1412.2 314.2 1402.0 325.1 1402 330.8 C1402.0 336.5 1404.2 339.1 1408 344 C1411.8 348.9 1423.8 355.3 1425 360 C1426.2 364.7 1416.7 370.0 1415 372"/>
<path d="M1522.6 187 C1529.2 194.0 1553.9 218.1 1562 229 C1570.1 239.9 1569.8 240.2 1571 252.4 C1572.2 264.6 1570.5 288.8 1569.5 302 C1568.5 315.2 1564.2 320.2 1565 331.5 C1565.8 342.8 1571.8 356.7 1574 369.6 C1576.2 382.5 1577.3 402.4 1578 409"/>
<path d="M1538.7 255.3 C1532.3 269.9 1505.5 317.6 1500.6 343.2 C1495.7 368.8 1506.2 389.1 1509.4 409 C1512.6 428.9 1518.0 446.4 1519.7 462.7 C1521.4 479.0 1518.5 496.3 1519.7 506.7 C1520.9 517.1 1525.8 522.0 1527 525"/>
<path d="M1512.4 427.6 C1518.7 433.2 1535.3 447.6 1550.4 461.3 C1565.5 475.0 1594.9 496.7 1603.2 509.6 C1611.5 522.6 1600.2 526.8 1600 539 C1599.8 551.2 1601.4 575.6 1601.7 582.9"/>
<path d="M1173.3 511.4 C1176.5 509.8 1185.9 505.1 1192.2 502 C1198.5 498.9 1206.0 495.3 1211 492.5 C1216.0 489.7 1206.0 495.4 1222.5 485 C1239.0 474.6 1289.2 444.0 1310 430 C1330.8 416.0 1337.5 409.5 1347.5 400.8 C1357.5 392.1 1366.2 381.8 1370 378"/>
<path d="M1182.8 413.2 C1185.0 414.8 1190.3 418.6 1196 422.7 C1201.7 426.8 1212.7 432.1 1216.8 437.8 C1220.9 443.5 1220.5 451.7 1220.5 456.7 C1220.5 461.7 1216.2 463.6 1216.8 468 C1217.4 472.4 1220.8 479.3 1224.3 483.1 C1227.8 486.9 1231.5 486.9 1237.5 490.7 C1243.5 494.5 1256.2 503.3 1260 505.8"/>
<path d="M1188.4 450 C1190.3 453.3 1197.3 464.7 1199.8 469.9 C1202.3 475.1 1200.7 476.2 1203.5 481.2 C1206.3 486.2 1214.6 497.0 1216.8 500.1"/>
<path d="M1370 378 C1371.3 380.3 1377.0 386.7 1378 392 C1379.0 397.3 1376.3 407.0 1376 410"/>
<path d="M1360 580 C1364.8 576.6 1380.7 563.9 1389 559.4 C1397.3 554.9 1406.5 554.1 1410 553"/>
<path d="M1518 518 C1515.6 526.4 1509.4 555.4 1503.6 568.2 C1497.8 581.0 1490.8 587.5 1483 594.6 C1475.2 601.7 1464.5 607.8 1456.7 610.7 C1448.9 613.6 1439.5 611.8 1436 612"/>
<path d="M998.8 583.9 C1000.9 581.0 1005.2 572.8 1011.7 566.7 C1018.2 560.6 1028.5 552.0 1037.5 547.3 C1046.5 542.6 1057.9 537.6 1065.4 538.7 C1072.9 539.8 1076.8 548.8 1082.6 553.8 C1088.4 558.8 1095.1 564.1 1100 568.8 C1104.9 573.5 1110.0 579.8 1112 582"/>
<path d="M1250 500 C1253.3 502.5 1264.3 507.5 1270 515 C1275.7 522.5 1281.3 532.5 1284 545 C1286.7 557.5 1286.0 575.3 1286 590 C1286.0 604.7 1284.3 625.8 1284 633"/>
<path d="M1284 625 C1290.0 623.8 1309.8 622.2 1320 618 C1330.2 613.8 1339.7 604.7 1345 600 C1350.3 595.3 1350.8 591.7 1352 590"/>
<path d="M1620 498 L1664 498"/>
<path d="M1236 344 C1233.7 347.0 1227.2 355.2 1222 362 C1216.8 368.8 1210.3 377.8 1205 385 C1199.7 392.2 1194.5 399.2 1190 405 C1185.5 410.8 1180.0 417.5 1178 420"/>
</g>
<g fill="none" stroke="#f4987c" stroke-width="2.100" stroke-linecap="round" stroke-linejoin="round">
<path d="M1462.5 279.8 C1466.7 281.3 1477.9 285.9 1487.5 289 C1497.1 292.1 1506.1 295.8 1520 298.5 C1533.9 301.2 1552.2 302.9 1571 305 C1589.8 307.1 1617.0 309.5 1632.5 311 C1648.0 312.5 1658.8 313.5 1664 314"/>
<path d="M1300 318 C1304.8 318.9 1317.5 321.7 1329 323.5 C1340.5 325.3 1356.6 327.6 1368.8 328.8 C1381.0 330.0 1396.5 330.5 1402 330.8"/>
<path d="M1421.5 410 C1423.4 414.8 1426.7 430.0 1433 439 C1439.3 448.0 1454.4 456.7 1459.6 464 C1464.8 471.3 1455.2 475.7 1464 483 C1472.8 490.3 1501.4 500.4 1512.4 508 C1523.4 515.6 1520.2 520.1 1530 528.7 C1539.8 537.3 1558.8 550.4 1571 559.4 C1583.2 568.4 1595.2 578.8 1603 582.9 C1610.8 587.0 1607.6 582.1 1617.8 584.3 C1628.0 586.5 1656.3 594.0 1664 596"/>
<path d="M1464 483 C1456.4 486.0 1433.5 496.6 1418.6 500.8 C1403.7 505.0 1384.4 505.3 1374.6 508 C1364.8 510.7 1362.4 515.5 1360 517"/>
<path d="M1360 517 C1356.7 520.0 1350.0 529.8 1340 535 C1330.0 540.2 1311.7 545.2 1300 548 C1288.3 550.8 1280.0 552.0 1270 552 C1260.0 552.0 1249.2 547.8 1240 548 C1230.8 548.2 1219.2 552.2 1215 553"/>
<path d="M1215 553 C1211.7 552.2 1202.2 550.2 1195 548 C1187.8 545.8 1179.5 543.0 1172 540 C1164.5 537.0 1158.7 533.0 1150 530 C1141.3 527.0 1127.7 523.5 1120 522 C1112.3 520.5 1106.7 521.2 1104 521"/>
<path d="M1664 433 C1661.7 436.5 1656.7 445.9 1650 454 C1643.3 462.1 1628.6 473.0 1623.7 481.8 C1618.8 490.6 1624.2 499.2 1620.8 506.7 C1617.3 514.2 1606.5 513.8 1603 527 C1599.5 540.2 1599.5 568.0 1600 585.8 C1600.5 603.6 1605.0 626.0 1606 634"/>
<path d="M986 599 C991.7 601.8 1010.7 611.2 1020 616 C1029.3 620.8 1036.0 624.7 1041.8 627.9 C1047.6 631.1 1052.5 633.8 1054.7 635"/>
<path d="M1041.8 627.9 C1045.4 624.9 1053.6 616.9 1063.3 609.6 C1073.0 602.3 1088.0 592.2 1100 583.9 C1112.0 575.6 1129.2 564.0 1135 560"/>
<path d="M1106 497 C1113.3 497.0 1139.0 494.5 1150 497 C1161.0 499.5 1164.3 507.8 1172 512 C1179.7 516.2 1189.3 519.0 1196 522 C1202.7 525.0 1209.3 528.7 1212 530"/>
<path d="M1172 512 L1170 540"/>
<path d="M1623.7 187 C1628.6 188.7 1646.7 191.0 1653 197 C1659.3 203.0 1660.3 213.8 1661.8 223 C1663.3 232.2 1661.8 247.2 1661.8 252"/>
</g>
<g fill="none" stroke="#e3708a" stroke-width="2.300" stroke-linecap="round" stroke-linejoin="round">
<path d="M960 635 C964.3 629.7 980.2 610.5 986 603 C991.8 595.5 990.2 593.9 994.5 590 C998.8 586.1 1006.0 582.3 1011.7 579.6 C1017.5 576.9 1022.5 576.3 1029 574 C1035.5 571.7 1042.2 568.8 1050.4 565.6 C1058.6 562.4 1071.2 559.2 1078.3 554.9 C1085.4 550.6 1088.9 545.6 1093 540 C1097.1 534.4 1100.6 528.3 1102.7 521.3 C1104.8 514.3 1101.8 507.2 1105.7 497.9 C1109.6 488.6 1119.4 475.0 1126.2 465.7 C1133.0 456.4 1141.1 448.1 1146.7 442.2 C1152.3 436.2 1154.3 434.9 1160 430 C1165.7 425.1 1174.5 419.2 1180.8 413 C1187.0 406.8 1193.0 398.3 1197.5 392.5 C1202.0 386.7 1203.8 383.9 1208 378 C1212.2 372.1 1218.0 365.0 1222.5 357 C1227.0 349.0 1232.9 334.5 1235 330"/>
<path d="M1180.8 480 C1180.5 477.6 1177.8 470.3 1178.8 465.4 C1179.8 460.5 1183.5 456.0 1187 450.8 C1190.5 445.6 1195.1 439.6 1199.6 434 C1204.1 428.4 1209.8 423.4 1214 417.5 C1218.2 411.6 1222.1 406.4 1224.6 398.8 C1227.1 391.2 1225.1 377.7 1228.8 371.7 C1232.5 365.7 1241.1 363.9 1247 363 C1252.9 362.1 1261.2 365.9 1264 366.5"/>
<path d="M1050 566 C1057.2 560.0 1080.5 540.2 1093 530 C1105.5 519.8 1113.8 512.2 1125 505 C1136.2 497.8 1150.7 491.8 1160 487 C1169.3 482.2 1171.5 479.4 1180.8 476 C1190.1 472.6 1204.9 469.2 1216 466.5 C1227.1 463.8 1239.5 463.3 1247.5 460 C1255.5 456.7 1258.5 451.7 1264 446.7 C1269.5 441.7 1274.5 435.2 1280.8 430 C1287.1 424.8 1297.5 418.6 1301.7 415.4 C1305.9 412.2 1303.1 415.2 1305.8 411 C1308.5 406.8 1314.9 397.2 1318 390 C1321.1 382.8 1323.1 375.8 1324.6 367.5 C1326.0 359.2 1326.0 347.1 1326.7 340 C1327.4 332.9 1328.0 330.6 1329 324.6 C1330.0 318.6 1330.2 310.7 1333 303.8 C1335.8 296.9 1341.3 289.8 1345.8 283 C1350.3 276.2 1355.1 269.8 1360 263 C1364.9 256.2 1370.8 248.6 1375 242 C1379.2 235.4 1383.3 226.6 1385 223.5"/>
<path d="M1356 201.7 C1357.4 202.9 1359.8 205.4 1364.6 209 C1369.4 212.6 1379.1 221.1 1385 223.5 C1390.9 225.9 1392.0 225.1 1400 223.5 C1408.0 221.9 1424.7 218.0 1433 214 C1441.3 210.0 1445.8 204.1 1450 199.6 C1454.2 195.1 1456.7 189.1 1458 187"/>
<path d="M1155.5 631 C1162.3 621.5 1187.5 591.3 1196.5 574 C1205.5 556.7 1204.8 538.4 1209.7 527.2 C1214.6 516.0 1219.2 514.5 1225.8 506.7 C1232.4 498.9 1238.0 488.9 1249.2 480.3 C1260.4 471.7 1280.8 461.7 1293 455 C1305.2 448.3 1313.4 446.2 1322.5 440 C1331.6 433.8 1337.9 425.1 1347.5 417.5 C1357.1 409.9 1367.7 404.1 1380 394.6 C1392.3 385.2 1411.7 369.4 1421.5 360.8 C1431.3 352.2 1434.1 350.3 1439 343 C1443.9 335.7 1445.4 329.5 1450.8 316.8 C1456.2 304.1 1464.9 283.6 1471.3 267 C1477.7 250.4 1483.6 230.3 1489 217 C1494.4 203.7 1501.2 192.0 1503.6 187"/>
<path d="M1264 366.5 C1270.3 374.6 1292.0 402.9 1301.7 415.4 C1311.5 427.9 1312.8 429.2 1322.5 441.5 C1332.2 453.8 1351.3 477.9 1360 489 C1368.7 500.1 1366.8 495.8 1374.6 508 C1382.4 520.2 1396.3 544.2 1407 562 C1417.7 579.8 1432.2 603.0 1439 615 C1445.8 627.0 1446.5 630.8 1448 634"/>
<path d="M1264 344 C1265.0 341.8 1266.5 335.0 1270 331 C1273.5 327.0 1281.2 324.9 1285 320 C1288.8 315.1 1290.9 309.3 1293 301.7 C1295.1 294.1 1294.0 281.9 1297.5 274.6 C1301.0 267.3 1309.1 263.3 1314 258 C1318.9 252.7 1322.5 247.9 1326.7 243 C1330.9 238.1 1335.5 231.7 1339 228.8 C1342.5 225.9 1346.1 226.1 1347.5 225.6"/>
<path d="M1280.8 303.8 C1284.3 305.5 1293.7 310.5 1301.7 314 C1309.7 317.5 1324.3 322.8 1328.8 324.6"/>
<path d="M1289 330 C1291.8 331.0 1299.2 334.3 1305.8 336 C1312.4 337.7 1321.8 338.6 1328.8 340.4 C1335.8 342.2 1341.0 343.6 1347.5 346.7 C1354.0 349.8 1362.6 356.9 1368 359 C1373.4 361.1 1374.7 358.5 1380 359 C1385.3 359.5 1396.7 361.5 1400 362"/>
<path d="M1370 330 C1370.4 333.5 1372.5 343.3 1372.5 351 C1372.5 358.7 1368.8 371.3 1370 376 C1371.2 380.7 1378.3 378.5 1380 379"/>
<path d="M1264 366.5 C1268.2 365.6 1278.5 360.8 1289 361 C1299.5 361.2 1313.2 365.0 1326.7 367.5 C1340.2 370.0 1362.8 374.6 1370 376"/>
<path d="M1235 330 C1237.2 331.3 1243.2 335.7 1248 338 C1252.8 340.3 1261.7 341.0 1264 344 C1266.3 347.0 1262.0 352.2 1262 356 C1262.0 359.8 1263.7 364.8 1264 366.5"/>
<path d="M1300 268 C1302.8 267.7 1309.8 264.2 1316.7 266 C1323.7 267.8 1333.0 275.3 1341.7 278.8 C1350.4 282.3 1351.8 280.5 1368.8 287 C1385.8 293.5 1425.8 310.7 1443.8 318 C1461.8 325.3 1467.5 326.6 1477 330.8 C1486.5 335.0 1484.9 337.0 1500.6 343.2 C1516.3 349.4 1555.4 362.4 1571 368 C1586.6 373.6 1583.3 375.5 1594 377 C1604.7 378.5 1623.3 376.3 1635 377 C1646.7 377.7 1659.2 380.3 1664 381"/>
<path d="M1327 226.7 C1330.8 227.0 1342.0 226.2 1350 228.8 C1358.0 231.4 1364.6 238.0 1375 242.3 C1385.4 246.6 1400.7 251.9 1412.5 254.8 C1424.3 257.8 1436.4 257.8 1445.8 260 C1455.2 262.2 1461.8 265.5 1468.8 268.3 C1475.8 271.1 1481.0 274.4 1487.5 276.7 C1494.0 279.0 1501.9 280.6 1508 281.9 C1514.1 283.2 1518.4 283.6 1524 284.6 C1529.6 285.6 1527.0 287.3 1541.7 288 C1556.4 288.7 1591.6 289.3 1612 289 C1632.4 288.7 1655.3 286.5 1664 286"/>
<path d="M1106 497 C1109.7 496.7 1120.7 495.0 1128 495 C1135.3 495.0 1146.3 496.7 1150 497"/>
<path d="M1180.9 475.5 C1177.1 477.7 1163.2 485.0 1158.2 488.8 C1153.2 492.6 1153.2 494.1 1150.7 498.2 C1148.2 502.3 1145.0 507.6 1143.1 513.3 C1141.2 519.0 1140.6 526.9 1139.3 532.2 C1138.0 537.5 1137.4 540.4 1135.5 545 C1133.6 549.6 1129.2 557.5 1128 560"/>
<path d="M1664 518.4 C1660.2 523.3 1647.7 539.4 1641 547.7 C1634.3 556.0 1627.4 561.6 1623.7 568 C1620.0 574.4 1619.5 574.8 1619 585.8 C1618.5 596.8 1620.5 626.0 1620.8 634"/>
</g>
<g>
<ellipse cx="1265" cy="420" rx="150" ry="95" fill="url(#h4)" transform="rotate(-35 1265 420)"/>
<ellipse cx="1440" cy="368" rx="42" ry="34" fill="url(#h4)"/>
<ellipse cx="1395" cy="232" rx="48" ry="26" fill="url(#h3)" transform="rotate(-20 1395 232)" opacity=".8"/>
<ellipse cx="1196" cy="445" rx="62" ry="42" fill="url(#h3)" transform="rotate(-42 1196 445)"/>
<ellipse cx="1262" cy="390" rx="50" ry="30" fill="url(#h3)" transform="rotate(-30 1262 390)" opacity=".5"/>
<ellipse cx="1340" cy="380" rx="40" ry="34" fill="url(#h3)" opacity=".8"/>
<ellipse cx="1145" cy="441" rx="60" ry="52" fill="url(#h2)" transform="rotate(-38 1145 441)"/>
<circle cx="1305" cy="374" r="54" fill="url(#h1)"/>
</g>
<rect x="1443.1" y="317" width="33" height="16" rx="2.500" fill="#f0d0d8" stroke="#d9a2b2" stroke-width=".9"/><text x="1459.6" y="328.8" text-anchor="middle" font-family="DejaVu Sans, Liberation Sans, sans-serif" font-size="9.800" fill="#6d3b48">E102</text>
<rect x="1376.4" y="353.7" width="27" height="16" rx="2.500" fill="#f0d0d8" stroke="#d9a2b2" stroke-width=".9"/><text x="1389.9" y="365.5" text-anchor="middle" font-family="DejaVu Sans, Liberation Sans, sans-serif" font-size="9.800" fill="#6d3b48">D83</text>
<rect x="1215.5" y="493.5" width="33" height="16" rx="2.500" fill="#f0d0d8" stroke="#d9a2b2" stroke-width=".9"/><text x="1232" y="505.3" text-anchor="middle" font-family="DejaVu Sans, Liberation Sans, sans-serif" font-size="9.800" fill="#6d3b48">E611</text>
<rect x="1389.3" y="543.5" width="27" height="16" rx="2.500" fill="#f0d0d8" stroke="#d9a2b2" stroke-width=".9"/><text x="1402.8" y="555.3" text-anchor="middle" font-family="DejaVu Sans, Liberation Sans, sans-serif" font-size="9.800" fill="#6d3b48">E66</text>
<rect x="1298.2" y="392.4" width="31" height="16" rx="2.500" fill="#c9dcb9" stroke="#a9bf9a" stroke-width=".9"/><text x="1313.7" y="404.2" text-anchor="middle" font-family="DejaVu Sans, Liberation Sans, sans-serif" font-size="9.800" fill="#5d6b55">E311</text>
<rect x="1198.5" y="413.5" width="27" height="16" rx="2.500" fill="#d5d3e6" stroke="#b5a9c9" stroke-width=".9"/><text x="1212" y="425.3" text-anchor="middle" font-family="DejaVu Sans, Liberation Sans, sans-serif" font-size="9.800" fill="#5a5470">E44</text>
<text x="1246" y="333" text-anchor="middle" font-family="DejaVu Sans, Liberation Sans, sans-serif" font-size="14" fill="#333" stroke="#f5f3ee" stroke-width="1.600" paint-order="stroke fill" stroke-opacity=".8">دبي</text>
<text x="1258" y="296" text-anchor="middle" font-family="DejaVu Sans, Liberation Sans, sans-serif" font-size="9" fill="#3a3a3a" stroke="#f5f3ee" stroke-width="1.600" paint-order="stroke fill" stroke-opacity=".8">ديرة</text>
<text x="1341" y="238" text-anchor="middle" font-family="DejaVu Sans, Liberation Sans, sans-serif" font-size="14" fill="#333" stroke="#f5f3ee" stroke-width="1.600" paint-order="stroke fill" stroke-opacity=".8">الشارقة</text>
<text x="1359" y="201" text-anchor="middle" font-family="DejaVu Sans, Liberation Sans, sans-serif" font-size="12" fill="#333" stroke="#f5f3ee" stroke-width="1.600" paint-order="stroke fill" stroke-opacity=".8">عجمان</text>
<text x="1497.7" y="212" text-anchor="middle" font-family="DejaVu Sans, Liberation Sans, sans-serif" font-size="10" fill="#3a3a3a" stroke="#f5f3ee" stroke-width="1.600" paint-order="stroke fill" stroke-opacity=".8">الزبير</text>
<text x="1648" y="234" text-anchor="middle" font-family="DejaVu Sans, Liberation Sans, sans-serif" font-size="10" fill="#3a3a3a" stroke="#f5f3ee" stroke-width="1.600" paint-order="stroke fill" stroke-opacity=".8">المعلا</text>
<text x="1572" y="292" text-anchor="middle" font-family="DejaVu Sans, Liberation Sans, sans-serif" font-size="10" fill="#3a3a3a" stroke="#f5f3ee" stroke-width="1.600" paint-order="stroke fill" stroke-opacity=".8">البطائح</text>
<text x="1630" y="328.5" text-anchor="middle" font-family="DejaVu Sans, Liberation Sans, sans-serif" font-size="10" fill="#3a3a3a" stroke="#f5f3ee" stroke-width="1.600" paint-order="stroke fill" stroke-opacity=".8">As Saman</text>
<text x="1568" y="348" text-anchor="middle" font-family="DejaVu Sans, Liberation Sans, sans-serif" font-size="10" fill="#3a3a3a" stroke="#f5f3ee" stroke-width="1.600" paint-order="stroke fill" stroke-opacity=".8">ابن رشيد</text>
<text x="1581" y="407.5" text-anchor="middle" font-family="DejaVu Sans, Liberation Sans, sans-serif" font-size="10" fill="#3a3a3a" stroke="#f5f3ee" stroke-width="1.600" paint-order="stroke fill" stroke-opacity=".8">محافز</text>
<text x="1467" y="483" text-anchor="middle" font-family="DejaVu Sans, Liberation Sans, sans-serif" font-size="10" fill="#3a3a3a" stroke="#f5f3ee" stroke-width="1.600" paint-order="stroke fill" stroke-opacity=".8">لهباب</text>
<text x="1517.6" y="512.5" text-anchor="middle" font-family="DejaVu Sans, Liberation Sans, sans-serif" font-size="10" fill="#3a3a3a" stroke="#f5f3ee" stroke-width="1.600" paint-order="stroke fill" stroke-opacity=".8">نزوى</text>
<text x="1635" y="502" text-anchor="middle" font-family="DejaVu Sans, Liberation Sans, sans-serif" font-size="10" fill="#3a3a3a" stroke="#f5f3ee" stroke-width="1.600" paint-order="stroke fill" stroke-opacity=".8">البحائص</text>
<text x="1646" y="534" text-anchor="middle" font-family="DejaVu Sans, Liberation Sans, sans-serif" font-size="10" fill="#3a3a3a" stroke="#f5f3ee" stroke-width="1.600" paint-order="stroke fill" stroke-opacity=".8">الخوالد</text>
<text x="1603" y="544.5" text-anchor="middle" font-family="DejaVu Sans, Liberation Sans, sans-serif" font-size="10" fill="#3a3a3a" stroke="#f5f3ee" stroke-width="1.600" paint-order="stroke fill" stroke-opacity=".8">الدفين</text>
<text x="1601" y="588" text-anchor="middle" font-family="DejaVu Sans, Liberation Sans, sans-serif" font-size="13" fill="#333" stroke="#f5f3ee" stroke-width="1.600" paint-order="stroke fill" stroke-opacity=".8">المدام</text>
<text x="951" y="608" text-anchor="middle" font-family="DejaVu Sans, Liberation Sans, sans-serif" font-size="13" fill="#333" stroke="#f5f3ee" stroke-width="1.600" paint-order="stroke fill" stroke-opacity=".8">غنتوت</text>
<text x="1036" y="553" text-anchor="middle" font-family="DejaVu Sans, Liberation Sans, sans-serif" font-size="9" fill="#666" stroke="#f5f3ee" stroke-width="1.600" paint-order="stroke fill" stroke-opacity=".8">واجهة دبي</text>
<text x="1034" y="565" text-anchor="middle" font-family="DejaVu Sans, Liberation Sans, sans-serif" font-size="9" fill="#666" stroke="#f5f3ee" stroke-width="1.600" paint-order="stroke fill" stroke-opacity=".8">المائية</text>
<text x="1093" y="632" text-anchor="middle" font-family="DejaVu Sans, Liberation Sans, sans-serif" font-size="9" fill="#555" stroke="#f5f3ee" stroke-width="1.600" paint-order="stroke fill" stroke-opacity=".8">مدينة دبي</text>
<text x="1437" y="621" text-anchor="middle" font-family="DejaVu Sans, Liberation Sans, sans-serif" font-size="9" fill="#555" stroke="#f5f3ee" stroke-width="1.600" paint-order="stroke fill" stroke-opacity=".8">مرغم</text>
<g transform="translate(1303 309.5) scale(1)" fill="#8461c4"><path d="M0 -6.500c.8 0 1 .8 1 1.600v2.500l5.500 3.200v1.400l-5.500-1.700v3.300l1.800 1.300v1.100l-2.800-.8-2.800.8v-1.100l1.800-1.300v-3.300l-5.500 1.700v-1.400l5.500-3.200v-2.500c0-.8.200-1.600 1-1.600z"/></g>
<g transform="translate(1411.3 246.5) scale(1)" fill="#8461c4"><path d="M0 -6.500c.8 0 1 .8 1 1.600v2.500l5.500 3.200v1.400l-5.500-1.700v3.300l1.800 1.300v1.100l-2.800-.8-2.800.8v-1.100l1.800-1.300v-3.300l-5.500 1.700v-1.400l5.500-3.200v-2.500c0-.8.200-1.600 1-1.600z"/></g>
<g transform="translate(1300.5 493) scale(1)" fill="#8461c4"><path d="M0 -6.500c.8 0 1 .8 1 1.600v2.500l5.500 3.200v1.400l-5.500-1.700v3.300l1.800 1.300v1.100l-2.800-.8-2.800.8v-1.100l1.800-1.300v-3.300l-5.500 1.700v-1.400l5.500-3.200v-2.500c0-.8.200-1.600 1-1.600z"/></g>
<g transform="translate(1161 585) scale(1)" fill="#8461c4"><path d="M0 -6.500c.8 0 1 .8 1 1.600v2.500l5.500 3.200v1.400l-5.500-1.700v3.300l1.800 1.300v1.100l-2.800-.8-2.800.8v-1.100l1.800-1.300v-3.300l-5.500 1.700v-1.400l5.500-3.200v-2.500c0-.8.200-1.600 1-1.600z"/></g>
</g>
</svg>
<div class="abs" style="left:738px;top:185px;width:928px;height:450px;border:2px solid #e3f2fd;border-radius:12px;pointer-events:none"></div>
<div class="abs" style="left:750px;top:197px;width:34px;height:64px;border:2px solid rgba(0,0,0,.2);border-radius:4px;background:#fff;background-clip:padding-box"></div>
<div class="abs" style="left:752px;top:228px;width:30px;height:1px;background:#ccc"></div>
<div class="t" style="left:752.700px;top:201px;width:30px;height:30px;text-align:center;font:700 24px/29px 'Liberation Mono','DejaVu Sans Mono',monospace;color:#000">+</div>
<div class="t" style="left:752.700px;top:232px;width:30px;height:30px;text-align:center;font:700 24px/28px 'Liberation Mono','DejaVu Sans Mono',monospace;color:#000">&#8722;</div>
<div class="abs" style="left:1429px;top:617px;width:235px;height:16px;background:rgba(255,255,255,.8);border-bottom-right-radius:10px"></div>
<svg class="abs" style="left:1434px;top:621px" width="12" height="8" viewBox="0 0 12 8"><rect width="12" height="4" fill="#4c7be1"/><rect y="4" width="12" height="4" fill="#ffd500"/></svg>
<div class="t" style="left:1449px;top:619px;font-size:12px;line-height:13px;color:#333"><span style="color:#0078a8">Leaflet</span> <span style="color:#555">|</span> &copy; OpenStreetMap contributors</div>


<!-- ================= LEGEND ================= -->
<div class="abs" style="left:738px;top:659px;width:927px;height:87px;border-radius:12px;background:linear-gradient(90deg,#e6f0fb 0%,#eae9f8 50%,#f3e6f5 100%)"></div>
<svg class="abs" style="left:755px;top:676px" width="14" height="17" viewBox="0 0 14 17" fill="none" stroke="#1e2235" stroke-width="1.300" stroke-linecap="round"><path d="M4.500 11.500C3 10.500 2 9 2 7a5 5 0 0 1 10 0c0 2-1 3.500-2.500 4.500v1.200h-5z"/><path d="M5 15h4"/></svg>
<div class="t" style="left:778px;top:677.500px;font-size:16px;color:#1e2235;letter-spacing:1.1px;-webkit-text-stroke:.25px #1e2235">Heatmap Legend</div>
<div class="lg" style="left:754px;background:#0000ff"></div><div class="t lgt" style="left:782.5px;letter-spacing:-0.1px">Low Density</div>
<div class="lg" style="left:882px;background:#00ff00"></div><div class="t lgt" style="left:910.5px;letter-spacing:0.1px">Medium Density</div>
<div class="lg" style="left:1038px;background:#ffff00"></div><div class="t lgt" style="left:1066.3px;letter-spacing:-0.1px">High Density</div>
<div class="lg" style="left:1170px;background:#ff0000"></div><div class="t lgt" style="left:1199px;letter-spacing:-0.05px">Very High Density</div>

<!-- ================= CHAT ================= -->
<div class="abs" style="left:1605px;top:689px;width:60px;height:60px;border-radius:50%;background:#212849"></div>
<svg class="abs" style="left:1605px;top:689px" width="60" height="60" viewBox="0 0 60 60"><circle cx="29.9" cy="28.7" r="14.2" fill="#fff"/><path d="M25.2 45.700 L20.500 38 L41 39.500Z" fill="#fff"/><path d="M28.600 35 Q33.600 41.200 38.600 35 Q33.600 37.300 28.600 35Z" fill="#212849"/></svg>
<div class="abs" style="left:1645px;top:689px;width:20px;height:20px;border-radius:50%;background:#c3161c"></div>
<div class="t" style="left:1645px;top:694px;width:20px;text-align:center;font-size:11px;font-weight:700;color:#fff">1</div>

</body>
</html>
